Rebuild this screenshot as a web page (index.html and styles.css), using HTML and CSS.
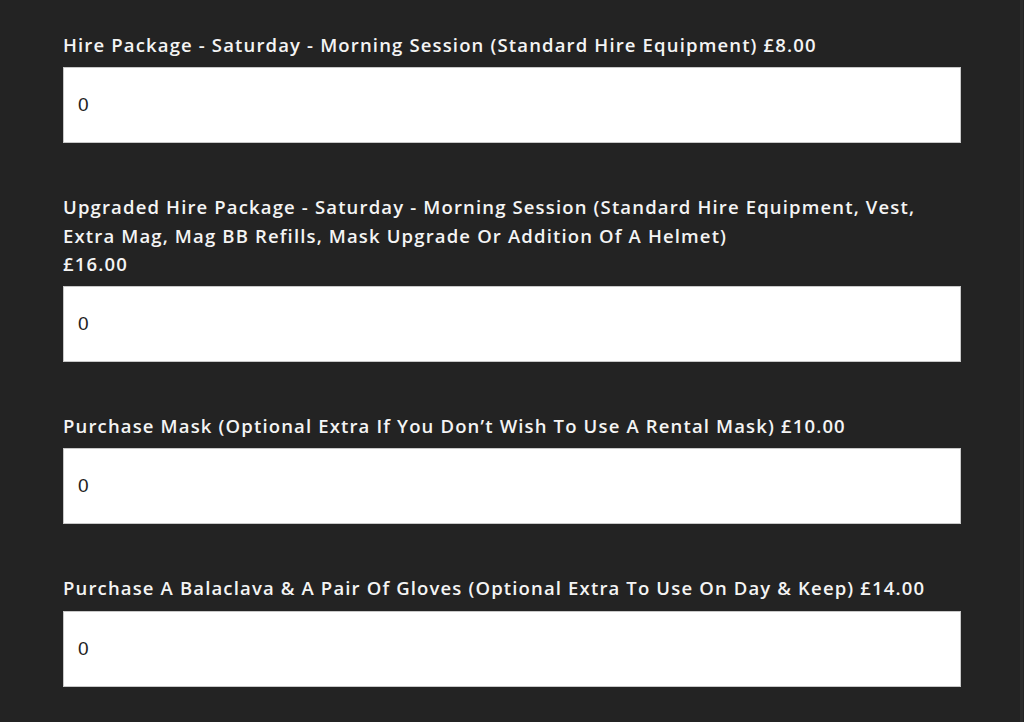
FILE: index.html
```html
<!DOCTYPE html>
<html lang="en">
<head>
<meta charset="utf-8">
<title>Hire options</title>
<link rel="stylesheet" href="styles.css">
</head>
<body>
<div class="page">
  <form class="form">
    <div class="field">
      <label class="label" for="q1">Hire Package - Saturday - Morning Session (Standard Hire Equipment) £8.00</label>
      <input class="input" id="q1" type="text" value="0">
    </div>
    <div class="field">
      <label class="label" for="q2">Upgraded Hire Package - Saturday - Morning Session (Standard Hire Equipment, Vest, Extra Mag, Mag BB Refills, Mask Upgrade Or Addition Of A Helmet)<br>£16.00</label>
      <input class="input" id="q2" type="text" value="0">
    </div>
    <div class="field">
      <label class="label" for="q3">Purchase Mask (Optional Extra If You Don’t Wish To Use A Rental Mask) £10.00</label>
      <input class="input" id="q3" type="text" value="0">
    </div>
    <div class="field">
      <label class="label" for="q4">Purchase A Balaclava &amp; A Pair Of Gloves (Optional Extra To Use On Day &amp; Keep) £14.00</label>
      <input class="input" id="q4" type="text" value="0">
    </div>
  </form>
  <div class="edge"></div>
</div>
</body>
</html>
```
FILE: styles.css
```css
html, body {
  margin: 0;
  padding: 0;
  background: #232323;
  height: 100%;
  overflow: hidden;
}
.page {
  display: flex;
  height: 722px;
}
.form {
  flex: 1;
  display: flex;
  flex-direction: column;
  gap: 50px;
  padding: 31px 0 0 63px;
}
.field {
  display: flex;
  flex-direction: column;
  gap: 8px;
  width: 898px;
}
.label {
  font-family: "Open Sans", sans-serif;
  font-weight: 600;
  font-size: 18.5px;
  line-height: 28.3px;
  color: #f4f4f4;
  letter-spacing: 1.15px;
}
.input {
  box-sizing: border-box;
  height: 76px;
  width: 898px;
  margin: 0;
  padding: 0 14px;
  border: 1px solid #c8c8c8;
  background: #ffffff;
  font-family: "Liberation Sans", sans-serif;
  font-size: 19px;
  color: #222222;
  outline: none;
}
.edge {
  width: 3px;
  margin-right: 1px;
  background: #2c2c2c;
}
```
